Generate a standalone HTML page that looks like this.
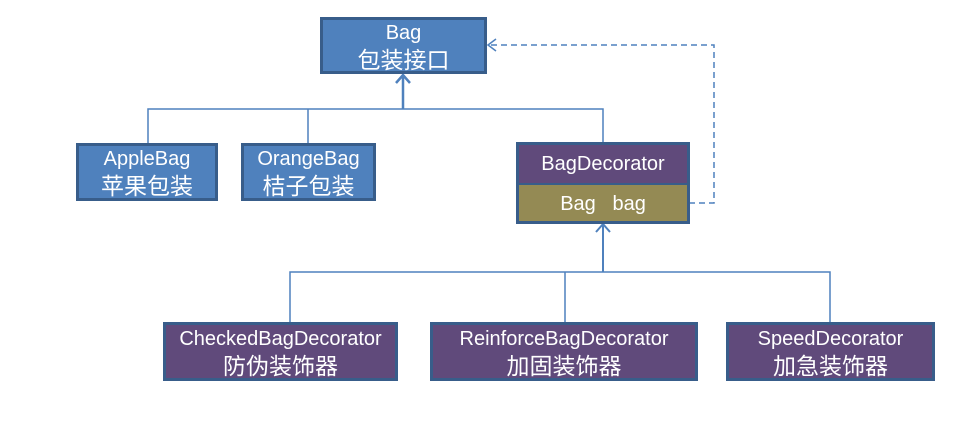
<!DOCTYPE html>
<html><head><meta charset="utf-8"><style>
body{margin:0;width:960px;height:425px;background:#fff;position:relative;overflow:hidden;font-family:"Liberation Sans","Noto Sans CJK SC",sans-serif;}
.b{position:absolute;box-sizing:border-box;border:3px solid #385d8a;color:#fff;text-align:center;font-size:20px;line-height:26px;}
.b span{font-size:23px;line-height:28px;display:block}
.blue{background:#4f81bd;}
.pur{background:#604a7b;}
svg{position:absolute;left:0;top:0}
</style></head><body>
<svg width="960" height="425">
<g stroke="#4f81bd" fill="none" stroke-width="1.5">
<path d="M148 144V109H603V143"/>
<path d="M308 109V144"/>
<path d="M403 109V75M396 83L403 75L410 83" stroke-width="2.5"/>
<path d="M603 224V272M596 232L603 224L610 232" stroke-width="2"/>
<path d="M290 323V272H830V323M565 272V323"/>
<path d="M689 203H714V45H488" stroke-dasharray="6,4"/>
<path d="M496 39L488 45L496 51"/>
</g>
</svg>
<div class="b blue" style="left:320px;top:17px;width:167px;height:57px">Bag<span>包装接口</span></div>
<div class="b blue" style="left:76px;top:143px;width:142px;height:58px">AppleBag<span>苹果包装</span></div>
<div class="b blue" style="left:241px;top:143px;width:135px;height:58px">OrangeBag<span>桔子包装</span></div>
<div class="b" style="left:516px;top:142px;width:174px;height:82px;background:#948a54">
<div style="background:#604a7b;height:38px;line-height:38px;border-bottom:2px solid #385d8a">BagDecorator</div>
<div style="line-height:38px">Bag&nbsp;&nbsp; bag</div></div>
<div class="b pur" style="left:163px;top:322px;width:235px;height:59px;padding-top:1px">CheckedBagDecorator<span>防伪装饰器</span></div>
<div class="b pur" style="left:430px;top:322px;width:268px;height:59px;padding-top:1px">ReinforceBagDecorator<span>加固装饰器</span></div>
<div class="b pur" style="left:726px;top:322px;width:209px;height:59px;padding-top:1px">SpeedDecorator<span>加急装饰器</span></div>
</body></html>
